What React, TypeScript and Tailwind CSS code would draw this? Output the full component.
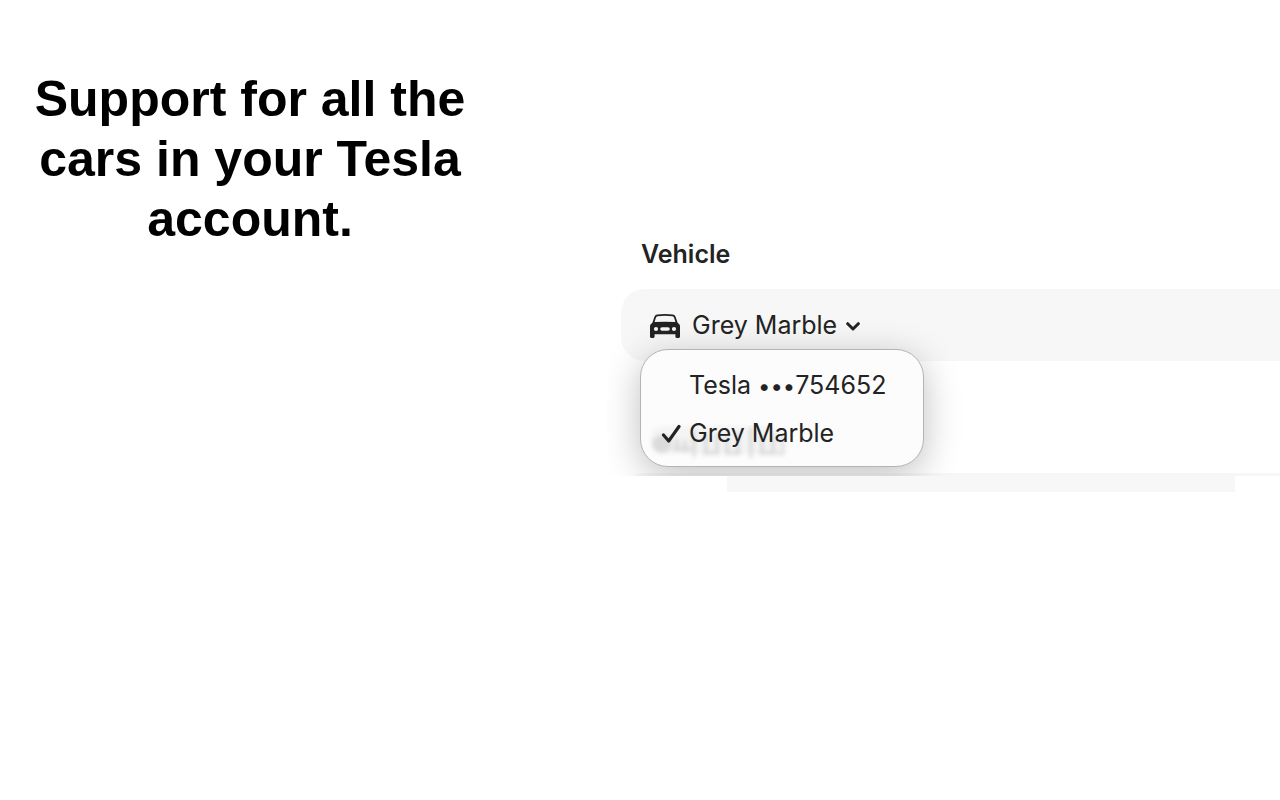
import React, { useState } from 'react';

interface IconProps {
    className?: string;
}

const CarIcon: React.FC<IconProps> = ({ className }) => (
    <svg viewBox="0 0 30 24" className={className} aria-hidden="true">
        <path
            fill="currentColor"
            fillRule="evenodd"
            d="M7 .6Q15-.4 23 .6Q25 .9 25.700 3L27.500 8.600Q30 10.300 30 13.200V22.400Q30 24 28.400 24H27Q25.400 24 25.400 22.400V20.200H4.600V22.400Q4.600 24 3 24H1.600Q0 24 0 22.400V13.200Q0 10.300 2.500 8.600L4.300 3Q5 .9 7 .6ZM7.500 2.200Q6.400 2.400 6 3.500L4.600 8Q15 7.300 25.400 8L24 3.500Q23.600 2.400 22.500 2.200Q15 1.400 7.500 2.200ZM6 12.900A2.100 2.100 0 1 0 6 17.100A2.100 2.100 0 1 0 6 12.900ZM24 12.900A2.100 2.100 0 1 0 24 17.100A2.100 2.100 0 1 0 24 12.900ZM12 13.200A1.800 1.800 0 0 0 12 16.800H18A1.800 1.800 0 0 0 18 13.200Z"
        />
    </svg>
);

const ChevronIcon: React.FC<IconProps> = ({ className }) => (
    <svg viewBox="0 0 14 9" className={className} fill="none" stroke="currentColor" strokeWidth="3" strokeLinecap="round" strokeLinejoin="round" aria-hidden="true">
        <path d="M1.700 1.700L7 7L12.300 1.700" />
    </svg>
);

const CheckIcon: React.FC<IconProps> = ({ className }) => (
    <svg viewBox="0 0 20 20" className={className} fill="none" stroke="currentColor" strokeWidth="3.2" strokeLinecap="round" strokeLinejoin="round" aria-hidden="true">
        <path d="M2.500 11L7.700 17L18 2.500" />
    </svg>
);

// what shows through the glass of the open menu
const Smudge: React.FC<IconProps> = ({ className }) => (
    <svg viewBox="0 0 160 50" className={className} fill="none" stroke="currentColor" aria-hidden="true">
        <rect x="10" y="10" width="130" height="28" rx="12" fill="currentColor" stroke="none" opacity=".3" />
        <ellipse cx="21" cy="28" rx="10" ry="9" fill="currentColor" stroke="none" />
        <path
            strokeWidth="4"
            d="M36 22V34M44 24V36M53 14V41M65 18V38M76 18V38M86 20V38M97 16V38M110 12V42M121 18V38M132 18V38M142 20V38M32 33H50M62 37H78M84 37H100M118 37H144"
        />
    </svg>
);

const vehicles = [
    { id: 'tesla', name: 'Tesla ', digits: '754652' },
    { id: 'grey', name: 'Grey Marble', digits: '' },
];

type Vehicle = (typeof vehicles)[number];

const VehicleName: React.FC<{ vehicle: Vehicle }> = ({ vehicle }) => (
    <span className="whitespace-pre">
        {vehicle.name}
        {vehicle.digits && <span className="text-[22px]">•••</span>}
        {vehicle.digits}
    </span>
);

const VehiclePicker: React.FC = () => {
    const [selected, setSelected] = useState(vehicles[1]);
    const [open, setOpen] = useState(true);

    return (
        <div className="relative shrink-0 rounded-l-3xl bg-[#f7f7f7] pl-[29px]">
            <button
                type="button"
                aria-haspopup="menu"
                aria-expanded={open}
                onClick={() => setOpen(!open)}
                className="flex h-[72px] items-center pt-[2px]"
            >
                <CarIcon className="mr-3 h-6 w-[30px]" />
                <VehicleName vehicle={selected} />
                <ChevronIcon className="ml-[9px] h-[9px] w-[14px]" />
            </button>
            {open && (
                <div
                    role="menu"
                    aria-labelledby="vehicle-heading"
                    className="absolute left-[19px] top-[60px] w-[284px] rounded-[28px] border border-[#b4b4b4] bg-[#fcfcfc] pb-2 pt-3 shadow-[0_8px_36px_rgba(0,0,0,0.25)]"
                >
                    <Smudge className="pointer-events-none absolute bottom-0 left-0 h-[50px] w-40 text-black/10 blur-[2px]" />
                    {vehicles.map((v) => (
                        <button
                            key={v.id}
                            type="button"
                            role="menuitemradio"
                            aria-checked={v === selected}
                            onClick={() => {
                                setSelected(v);
                                setOpen(false);
                            }}
                            className="relative flex h-12 w-full items-center pl-5"
                        >
                            <span className="w-7">
                                {v === selected && <CheckIcon className="size-5" />}
                            </span>
                            <VehicleName vehicle={v} />
                        </button>
                    ))}
                </div>
            )}
        </div>
    );
};

export default function App() {
    return (
        <main className="flex min-h-screen items-start bg-white">
            <h1 className="w-[500px] shrink-0 px-8 pt-[69px] text-center font-['Liberation_Sans',Arial,sans-serif] text-[50px] font-bold leading-[60px] text-black">
                Support for all the cars in your Tesla account.
            </h1>
            <div className="ml-[107px] min-w-0 flex-1 font-[Inter,sans-serif] text-[25px] text-[#232323]">
                <section className="flex h-[476px] flex-col overflow-hidden pl-[14px]">
                    <h2 id="vehicle-heading" className="mb-4 mt-[235px] pl-5 font-semibold leading-[38px]">
                        Vehicle
                    </h2>
                    <VehiclePicker />
                    <div className="mt-28 h-[72px] shrink-0 rounded-l-3xl bg-[#f7f7f7]" />
                </section>
                <div className="ml-[120px] mr-[45px] h-4 bg-[#f7f7f7]" />
            </div>
        </main>
    );
}
